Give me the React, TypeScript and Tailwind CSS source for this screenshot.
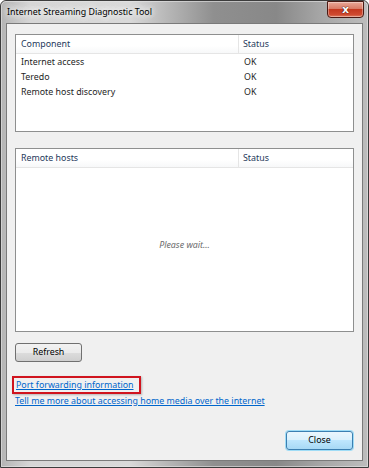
import React from "react";

const font = { fontFamily: '"Noto Sans", "Open Sans", Arial, sans-serif' };

function ListBox({
  heightClass,
  col1,
  rows,
  children,
}: {
  heightClass: string;
  col1: string;
  rows?: [string, string][];
  children?: React.ReactNode;
}) {
  return (
    <div className={`${heightClass} border border-[#8e8f8f] bg-white flex flex-col`}>
      <div className="h-[19px] flex border-b border-[#e5e5e5] bg-[linear-gradient(#ffffff,#ffffff_60%,#f7f8f9)] text-[#1e395b]">
        <div className="w-[223px] border-r border-[#e5e5e5] pl-[5px] flex items-center">{col1}</div>
        <div className="flex-1 pl-[4px] flex items-center">Status</div>
      </div>
      {rows && (
        <div className="flex flex-col">
          {rows.map(([a, b]) => (
            <div key={a} className="h-[15px] flex items-center text-[#1e1e1e]">
              <div className="w-[224px] pl-[5px]">{a}</div>
              <div className="flex-1 pl-[4px]">{b}</div>
            </div>
          ))}
        </div>
      )}
      {children}
    </div>
  );
}

export default function App() {
  return (
    <div
      className="w-[369px] h-[468px] relative text-[8.85px] leading-[12px] text-black"
      style={font}
    >
      <div className="absolute inset-0 rounded-t-[6px] border border-[#3c3c3c] bg-[linear-gradient(90deg,#b4b4b4_0%,#d6d6d6_8%,#d9d9d9_35%,#b8b8b8_45%,#8f8f8f_58%,#888888_75%,#a6a6a6_87%,#bdbdbd_100%)]" />
      <div className="absolute inset-[1px] rounded-t-[5px] border border-[#e6e6e6]/60" />
      <div className="relative h-full flex flex-col">
        {/* title bar */}
        <div className="h-[23px] flex items-start">
          <div
            className="pl-[7px] pt-[6px] text-[8.85px] leading-[12px] text-black"
            style={{ textShadow: "0 0 6px #ffffff, 0 0 8px #ffffff, 0 0 10px #ffffff" }}
          >
            Internet Streaming Diagnostic Tool
          </div>
          <div className="ml-auto mr-[5px] mt-[1px] w-[37px] h-[17px] rounded-b-[4px] border border-[#4a1a14] bg-[linear-gradient(#e9a898,#d97a66_45%,#c4381f_50%,#cf4a30_85%,#e0866a)] flex items-center justify-center shadow-[inset_0_0_0_1px_rgba(255,255,255,0.35)]">
            <span
              className="text-white font-bold text-[11px] leading-none"
              style={{ fontFamily: '"DejaVu Sans", sans-serif', textShadow: "0 0 1px #3a0a04, 0 0 1px #3a0a04" }}
            >
              x
            </span>
          </div>
        </div>
        {/* client */}
        <div className="mx-[6px] border border-[#7a7a7a] bg-[#f0f0f0] h-[438px] flex flex-col px-[8px] pt-[10px]">
          <ListBox
            heightClass="h-[98px]"
            col1="Component"
            rows={[
              ["Internet access", "OK"],
              ["Teredo", "OK"],
              ["Remote host discovery", "OK"],
            ]}
          />
          <div className="mt-[16px]">
            <ListBox heightClass="h-[184px]" col1="Remote hosts">
              <div className="flex-1 flex items-center justify-center italic text-[#6d6d6d] pb-[10px]">
                Please wait...
              </div>
            </ListBox>
          </div>
          <div className="mt-[11px]">
            <button className="w-[67px] h-[19px] rounded-[3px] border border-[#707070] bg-[linear-gradient(#f2f2f2,#ebebeb_50%,#dddddd_50%,#cfcfcf)] text-[8.85px] leading-none text-black flex items-center justify-center">
              Refresh
            </button>
          </div>
          <div className="mt-[14px]">
            <span className="inline-flex items-center -ml-[3px] border-2 border-[#d0141e] pl-[2px] pr-[5px] h-[18px] shadow-[1px_1px_2px_rgba(0,0,0,0.25)]">
              <span className="text-[#0066cc] underline leading-[12px]">Port forwarding information</span>
            </span>
          </div>
          <div className="mt-[1px] text-[#0066cc] underline leading-[12px]">
            Tell me more about accessing home media over the internet
          </div>
          <div className="mt-auto mb-[10px] flex justify-end pr-[1px]">
            <button className="w-[67px] h-[19px] rounded-[3px] border border-[#3c7fb1] bg-[linear-gradient(#eaf6fd,#d9f0fc_50%,#bee6fd_50%,#a7d9f5)] shadow-[0_0_0_1px_#9fdcf6] text-[8.85px] leading-none text-black flex items-center justify-center">
              Close
            </button>
          </div>
        </div>
      </div>
    </div>
  );
}
